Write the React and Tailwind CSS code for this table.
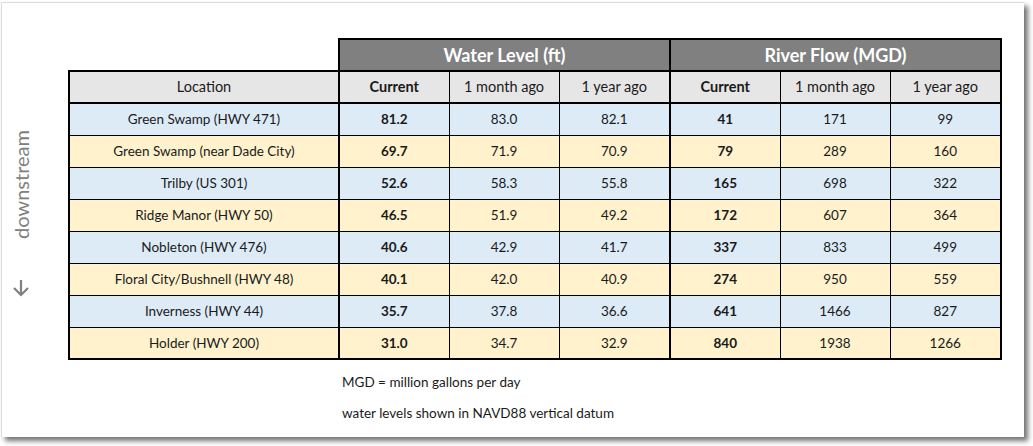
const rows = [
  ["Green Swamp (HWY 471)", "81.2", "83.0", "82.1", "41", "171", "99"],
  ["Green Swamp (near Dade City)", "69.7", "71.9", "70.9", "79", "289", "160"],
  ["Trilby (US 301)", "52.6", "58.3", "55.8", "165", "698", "322"],
  ["Ridge Manor (HWY 50)", "46.5", "51.9", "49.2", "172", "607", "364"],
  ["Nobleton (HWY 476)", "40.6", "42.9", "41.7", "337", "833", "499"],
  ["Floral City/Bushnell (HWY 48)", "40.1", "42.0", "40.9", "274", "950", "559"],
  ["Inverness (HWY 44)", "35.7", "37.8", "36.6", "641", "1466", "827"],
  ["Holder (HWY 200)", "31.0", "34.7", "32.9", "840", "1938", "1266"],
];

const App = () => {
  return (
    <div className="w-[1033px] h-[446px] bg-white pt-[2px] pl-[1px] font-['Lato','Liberation_Sans',sans-serif] text-[#1a1a1a]">
      <div className="flex w-[1023px] h-[435px] bg-white border-t border-l border-[#dcdcdc] shadow-[4px_4px_5px_rgba(0,0,0,0.55)]">
        {/* side label */}
        <div className="w-[37px] flex flex-col items-center pt-[127px]">
          <span className="[writing-mode:vertical-rl] rotate-180 text-[20px] text-[#808080] leading-none">
            downstream
          </span>
          <svg className="mt-[40px]" width="18" height="18" viewBox="0 0 18 18" fill="none" stroke="#808080" strokeWidth="2.2">
            <path d="M9 1v15M2 9l7 7 7-7" />
          </svg>
        </div>

        <div className="pl-[29px] pt-[35px]">
          <table className="border-collapse text-[13.5px] text-center">
            <colgroup>
              <col className="w-[270px]" />
              <col className="w-[110px]" />
              <col className="w-[110px]" />
              <col className="w-[111px]" />
              <col className="w-[110px]" />
              <col className="w-[110px]" />
              <col className="w-[111px]" />
            </colgroup>
            <thead>
              <tr className="h-[32px]">
                <th className="p-0"></th>
                <th colSpan={3} className="p-0 bg-[#808080] border-2 border-black text-white text-[18px] font-bold">
                  Water Level (ft)
                </th>
                <th colSpan={3} className="p-0 bg-[#808080] border-2 border-black text-white text-[18px] font-bold">
                  River Flow (MGD)
                </th>
              </tr>
              <tr className="h-[32px] bg-[#e7e6e6] text-[14.5px]">
                <th className="p-0 font-normal border-2 border-black">Location</th>
                <th className="p-0 font-bold border-2 border-r border-black">Current</th>
                <th className="p-0 font-normal border-y-2 border-x border-black">1 month ago</th>
                <th className="p-0 font-normal border-2 border-l border-black">1 year ago</th>
                <th className="p-0 font-bold border-2 border-r border-black">Current</th>
                <th className="p-0 font-normal border-y-2 border-x border-black">1 month ago</th>
                <th className="p-0 font-normal border-2 border-l border-black">1 year ago</th>
              </tr>
            </thead>
            <tbody>
              {rows.map((r, i) => {
                const last = i === rows.length - 1;
                const bot = last ? "border-b-2" : "border-b";
                return (
                  <tr key={r[0]} className={`h-[32px] ${i % 2 === 0 ? "bg-[#ddebf7]" : "bg-[#fff2cc]"}`}>
                    <td className={`p-0 border-x-2 border-black ${bot}`}>{r[0]}</td>
                    <td className={`p-0 font-bold border-l-2 border-r border-black ${bot}`}>{r[1]}</td>
                    <td className={`p-0 border-x border-black ${bot}`}>{r[2]}</td>
                    <td className={`p-0 border-r-2 border-l border-black ${bot}`}>{r[3]}</td>
                    <td className={`p-0 font-bold border-l-2 border-r border-black ${bot}`}>{r[4]}</td>
                    <td className={`p-0 border-x border-black ${bot}`}>{r[5]}</td>
                    <td className={`p-0 border-r-2 border-l border-black ${bot}`}>{r[6]}</td>
                  </tr>
                );
              })}
            </tbody>
          </table>

          <div className="pl-[274px] pt-[7px] text-[13.5px] leading-[31px]">
            <p>MGD = million gallons per day</p>
            <p>water levels shown in NAVD88 vertical datum</p>
          </div>
        </div>
      </div>
    </div>
  );
};

export default App;
